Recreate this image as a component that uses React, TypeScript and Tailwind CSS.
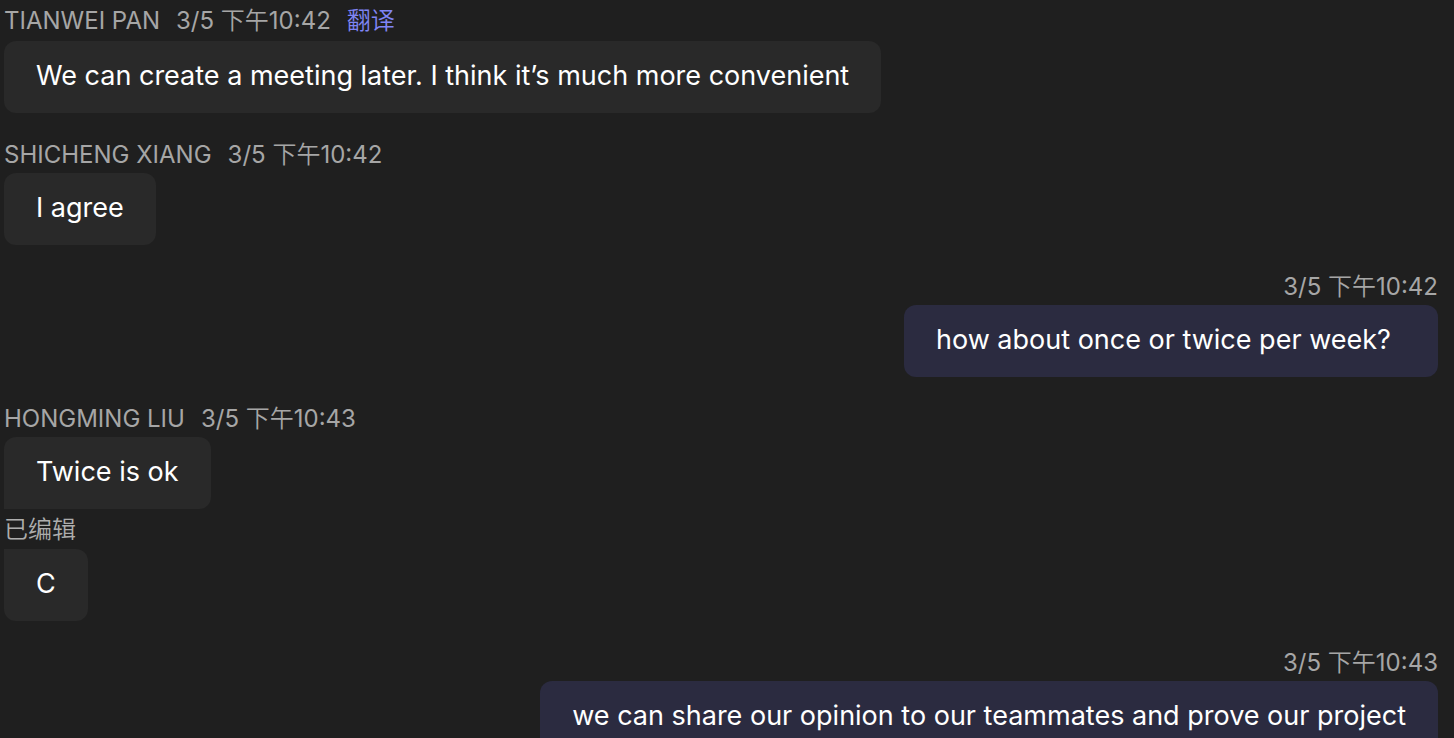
import React from "react";

type Message = {
  id: number;
  sender?: string;
  time?: string;
  text: string;
  own?: boolean;
  translate?: boolean;
  edited?: boolean;
  follows?: boolean;
};

const messages: Message[] = [
  { id: 1, sender: "TIANWEI PAN", time: "3/5 下午10:42", translate: true, text: "We can create a meeting later. I think it’s much more convenient" },
  { id: 2, sender: "SHICHENG XIANG", time: "3/5 下午10:42", text: "I agree" },
  { id: 3, time: "3/5 下午10:42", own: true, text: "how about once or twice per week?" },
  { id: 4, sender: "HONGMING LIU", time: "3/5 下午10:43", text: "Twice is ok", edited: true },
  { id: 5, text: "C", follows: true },
  { id: 6, time: "3/5 下午10:43", own: true, text: "we can share our opinion to our teammates and prove our project" },
];

function MessageRow({ message }: { message: Message }) {
  const { sender, time, text, own, translate, edited, follows } = message;
  const corners = follows ? "rounded-tl-none" : edited ? "rounded-bl-none" : "";
  return (
    <article className={`flex flex-col ${own ? "items-end" : "items-start"} ${edited ? "" : "mb-7"}`}>
      {time && (
        <header className={`flex items-start gap-4 whitespace-nowrap text-2xl leading-7 text-[#a6a6a6] ${translate ? "h-[34px]" : "h-8"}`}>
          {sender && <span>{sender}</span>}
          <time>{time}</time>
          {translate && <button type="button" className="cursor-pointer font-[350] text-[#7f85f5]">翻译</button>}
        </header>
      )}
      <p className={`rounded-xl px-8 pt-[17px] pb-[19px] text-[27px] leading-9 text-white ${own ? "min-w-[534px] bg-[#2b2b40]" : "min-w-[84px] bg-[#292929]"} ${corners}`}>{text}</p>
      {edited && <span className="h-10 text-2xl leading-[42px] font-[350] text-[#adadad]">已编辑</span>}
    </article>
  );
}

export default function App() {
  return (
    <main className="h-screen overflow-hidden bg-[#1f1f1f] pt-[7px] pr-4 pl-1 font-['Inter','Noto_Sans_CJK_SC_DemiLight','Noto_Sans_CJK_SC',sans-serif]">
      {messages.map((message) => (
        <MessageRow key={message.id} message={message} />
      ))}
    </main>
  );
}
